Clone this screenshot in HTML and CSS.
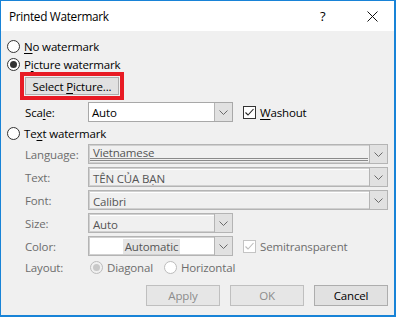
FILE: index.html
```html
<!DOCTYPE html>
<html>
<head>
    <meta charset="utf-8">
    <title>Printed Watermark</title>
    <link rel="stylesheet" href="styles.css">
</head>
<body>
    <div class="window">
        <div class="titlebar">
            <span class="title">Printed Watermark</span>
            <span class="help">?</span>
            <svg class="close" width="11" height="11" viewBox="0 0 11 11"><path d="M0.5 0.5L10.5 10.5M10.5 0.5L0.5 10.5" stroke="#111" stroke-width="1"/></svg>
        </div>

        <div class="content">
            <div class="row radio-row first">
                <span class="radio"></span>
                <span><u>N</u>o watermark</span>
            </div>
            <div class="row radio-row second">
                <span class="radio checked"></span>
                <span>P<u>i</u>cture watermark</span>
            </div>

            <div class="highlight">
                <div class="button"><span>Select <u>P</u>icture...</span></div>
            </div>

            <div class="row field-row scale-row">
                <span class="label">Sca<u>l</u>e:</span>
                <div class="combo narrow enabled">
                    <span class="value">Auto</span>
                    <span class="arrow"><svg width="9" height="5" viewBox="0 0 9 5"><path d="M0.5 0.5L4.5 4.5L8.5 0.5" fill="none" stroke="#6a6a6a"/></svg></span>
                </div>
                <span class="checkbox checked"><svg width="11" height="11" viewBox="0 0 11 11"><path d="M1.5 5.5L4 8L9.5 2" fill="none" stroke="#222" stroke-width="1.1"/></svg></span>
                <span class="check-label"><u>W</u>ashout</span>
            </div>

            <div class="row radio-row third">
                <span class="radio"></span>
                <span>Te<u>x</u>t watermark</span>
            </div>

            <div class="row field-row">
                <span class="label disabled">Language:</span>
                <div class="combo wide">
                    <span class="value lined">Vietnamese</span>
                    <span class="arrow"><svg width="9" height="5" viewBox="0 0 9 5"><path d="M0.5 0.5L4.5 4.5L8.5 0.5" fill="none" stroke="#6a6a6a"/></svg></span>
                </div>
            </div>
            <div class="row field-row gap">
                <span class="label disabled">Text:</span>
                <div class="combo wide">
                    <span class="value">TÊN CỦA BẠN</span>
                    <span class="arrow"><svg width="9" height="5" viewBox="0 0 9 5"><path d="M0.5 0.5L4.5 4.5L8.5 0.5" fill="none" stroke="#6a6a6a"/></svg></span>
                </div>
            </div>
            <div class="row field-row gap">
                <span class="label disabled">Font:</span>
                <div class="combo wide">
                    <span class="value">Calibri</span>
                    <span class="arrow"><svg width="9" height="5" viewBox="0 0 9 5"><path d="M0.5 0.5L4.5 4.5L8.5 0.5" fill="none" stroke="#6a6a6a"/></svg></span>
                </div>
            </div>
            <div class="row field-row gap">
                <span class="label disabled">Size:</span>
                <div class="combo narrow">
                    <span class="value">Auto</span>
                    <span class="arrow"><svg width="9" height="5" viewBox="0 0 9 5"><path d="M0.5 0.5L4.5 4.5L8.5 0.5" fill="none" stroke="#6a6a6a"/></svg></span>
                </div>
            </div>
            <div class="row field-row gap">
                <span class="label disabled">Color:</span>
                <div class="combo narrow white">
                    <span class="value centered"><span class="selected">Automatic</span></span>
                    <span class="arrow"><svg width="9" height="5" viewBox="0 0 9 5"><path d="M0.5 0.5L4.5 4.5L8.5 0.5" fill="none" stroke="#6a6a6a"/></svg></span>
                </div>
                <span class="checkbox disabled-box"><svg width="11" height="11" viewBox="0 0 11 11"><path d="M1.5 5.5L4 8L9.5 2" fill="none" stroke="#bcbcbc" stroke-width="1.1"/></svg></span>
                <span class="check-label disabled">Semitransparent</span>
            </div>

            <div class="row layout-row">
                <span class="label disabled">Layout:</span>
                <span class="radio grey checked-grey"></span>
                <span class="disabled">Diagonal</span>
                <span class="radio grey second-radio"></span>
                <span class="disabled">Horizontal</span>
            </div>

            <div class="buttons">
                <div class="button dialog disabled-button">Apply</div>
                <div class="button dialog disabled-button">OK</div>
                <div class="button dialog">Cancel</div>
            </div>
        </div>
    </div>
</body>
</html>
```

FILE: styles.css
```css
body {
    margin: 0;
    font-family: "Open Sans", "Noto Sans", sans-serif;
    font-size: 11.5px;
    letter-spacing: -0.15px;
    color: #000;
}

.window {
    width: 396px;
    height: 317px;
    box-sizing: border-box;
    border-style: solid;
    border-color: #1883d7;
    border-width: 1px 2px 2px 1px;
    background-color: #f0f0f0;
    display: flex;
    flex-direction: column;
    overflow: hidden;
}

.titlebar {
    height: 30px;
    flex-shrink: 0;
    background-color: #fff;
    display: flex;
    align-items: center;
    padding-left: 8px;
}

.title {
    flex: 1;
    font-size: 11.8px;
    letter-spacing: -0.3px;
}

.help {
    width: 10px;
    margin-right: 37px;
    font-size: 13px;
}

.close {
    margin-right: 16px;
}

.content {
    padding: 0 6px 0 6px;
}

.row {
    display: flex;
    align-items: center;
}

.radio-row.first {
    margin-top: 6px;
    height: 18px;
}

.radio-row.second {
    height: 15px;
    padding-top: 2px;
}

.radio-row.third {
    margin-top: 2px;
    height: 18px;
}

.radio {
    width: 13px;
    height: 13px;
    box-sizing: border-box;
    border: 1px solid #333;
    border-radius: 50%;
    background-color: #fff;
    margin-right: 4px;
    position: relative;
    flex-shrink: 0;
}

.radio.checked::after {
    content: "";
    position: absolute;
    left: 2px;
    top: 2px;
    width: 7px;
    height: 7px;
    border-radius: 50%;
    background-color: #333;
}

.radio.grey {
    border-color: #bcbcbc;
}

.radio.checked-grey {
    background-color: #f0f0f0;
    margin-left: 1px;
}

.radio.checked-grey::after {
    content: "";
    position: absolute;
    left: 2px;
    top: 2px;
    width: 7px;
    height: 7px;
    border-radius: 50%;
    background-color: #c8c8c8;
}

.radio.second-radio {
    margin-left: 11px;
}

.highlight {
    width: 104px;
    height: 28px;
    box-sizing: border-box;
    border: 4px solid #e81b24;
    padding: 1px;
    margin-left: 13px;
}

.button {
    box-sizing: border-box;
    height: 18px;
    border: 1px solid #adadad;
    background-color: #e1e1e1;
    display: flex;
    align-items: center;
    justify-content: center;
}

.highlight .button {
    width: 94px;
    height: 18px;
}

.field-row {
    height: 20px;
    margin-top: 2px;
    padding-left: 18px;
}

.field-row.gap {
    margin-top: 3px;
}

.label {
    width: 63px;
    flex-shrink: 0;
}

.disabled {
    color: #6d6d6d;
}

.combo {
    box-sizing: border-box;
    height: 20px;
    display: flex;
    border: 1px solid #b4b4b4;
    box-shadow: inset 0 0 0 1px #d0d0d0;
    background-color: #f0f0f0;
    color: #555;
}

.combo.enabled {
    border-color: #a8a8a8;
    box-shadow: none;
    background-color: #fff;
    color: #000;
}

.combo.white {
    background-color: #fff;
}

.combo.narrow {
    width: 145px;
}

.combo.wide {
    width: 300px;
}

.value {
    flex: 1;
    display: flex;
    align-items: center;
    padding-left: 3px;
    border-top: 1px solid #fff;
    margin: 1px 0 0 1px;
}

.combo.enabled .value {
    border-top: none;
    margin: 0;
}

.value.lined {
    border-top: none;
    border-bottom: 3px double #8a8a8a;
    margin: 0 1px 2px 1px;
    padding-top: 1px;
}

.value.centered {
    justify-content: center;
    border-top: none;
    margin: 0;
    padding-left: 0;
}

.selected {
    background-color: #e5e5e5;
    padding: 0 2px;
    line-height: 15px;
    color: #555;
}

.arrow {
    width: 17px;
    flex-shrink: 0;
    display: flex;
    align-items: center;
    justify-content: center;
    background-color: #e1e1e1;
    border-left: 1px solid #b4b4b4;
}

.checkbox {
    width: 13px;
    height: 13px;
    box-sizing: border-box;
    border: 1px solid #333;
    background-color: #fff;
    margin-left: 10px;
    margin-right: 4px;
    display: flex;
    align-items: center;
    justify-content: center;
}

.checkbox.disabled-box {
    border-color: #c4c4c4;
}

.layout-row {
    height: 19px;
    margin-top: 2px;
    padding-left: 18px;
}

.layout-row .label {
    width: 64px;
}

.buttons {
    display: flex;
    justify-content: flex-end;
    gap: 10px;
    margin-top: 8px;
    padding-right: 0;
}

.button.dialog {
    width: 74px;
    height: 21px;
}

.button.disabled-button {
    border-color: #bfbfbf;
    background-color: #e6e6e6;
    color: #8c8c8c;
}

u {
    text-decoration-thickness: 1px;
    text-underline-offset: 2px;
}
```
